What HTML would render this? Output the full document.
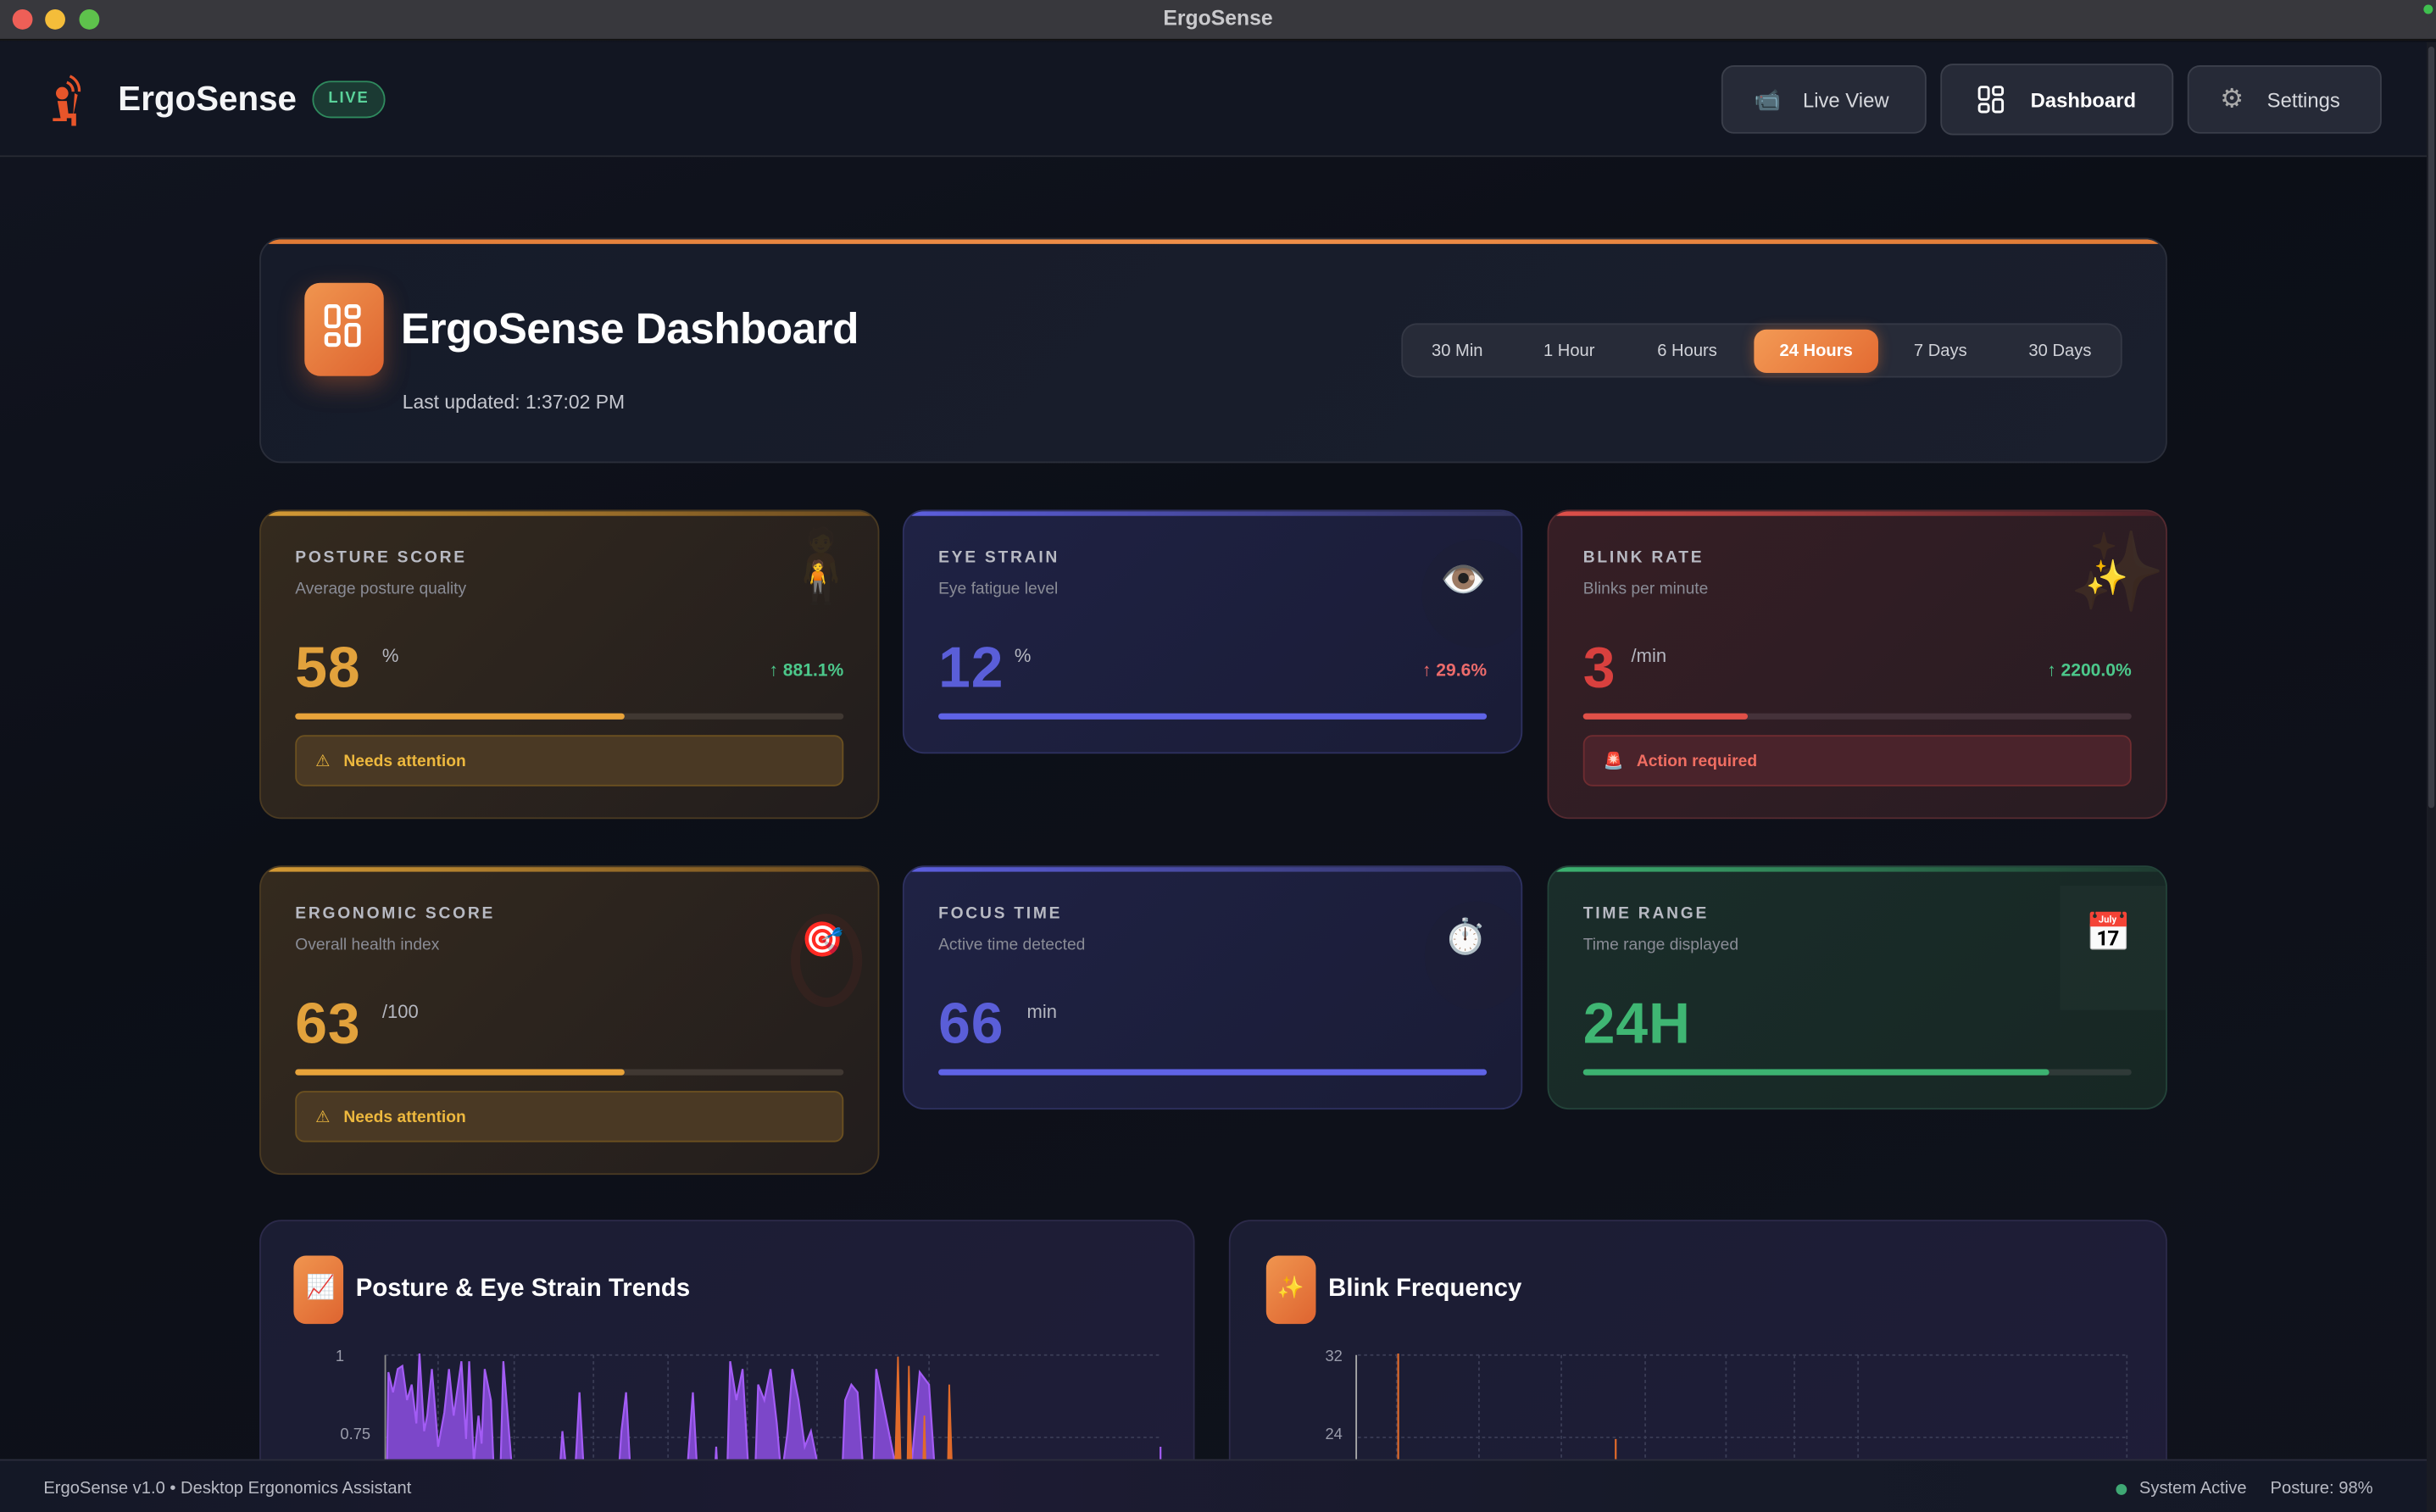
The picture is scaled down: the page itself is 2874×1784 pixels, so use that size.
<!DOCTYPE html>
<html><head><meta charset="utf-8">
<style>
*{box-sizing:border-box;margin:0;padding:0}
html,body{width:2874px;height:1784px;overflow:hidden;background:#0d1018}
body{font-family:"Liberation Sans","DejaVu Sans",sans-serif;color:#fff}
#s{position:absolute;left:0;top:0;width:1568px;height:973px;transform:scale(1.83291,1.83350);transform-origin:0 0;background:linear-gradient(160deg,#121521 0%,#0c0f17 40%,#10131d 100%);overflow:hidden}
.abs{position:absolute}
.tb{left:0;top:0;width:1568px;height:26px;background:#38383d;border-bottom:1px solid #111}
.dot{position:absolute;top:6px;width:13px;height:13px;border-radius:50%}
.hdr{left:0;top:27px;width:1562px;height:74px;background:#121622;border-bottom:1px solid #272a33}
.nav{position:absolute;top:42px;height:44px;background:#262a37;border:1px solid #3b3f4b;border-radius:8px;color:#d7d9de;font-size:13px;display:flex;align-items:center}
.card{position:absolute;border-radius:14px;overflow:hidden}
.lbl{position:absolute;left:22px;top:24px;font-size:10.5px;font-weight:bold;letter-spacing:1.5px;color:#b8bac3}
.sub{position:absolute;left:22px;top:44px;font-size:10.5px;color:#8a8c96}
.val{position:absolute;left:22px;top:80px;font-size:37px;font-weight:bold;letter-spacing:0.5px}
.unit{position:absolute;top:86px;font-size:12px;color:#b5b7c0}
.tr{position:absolute;right:22px;top:97px;font-size:11.5px;font-weight:bold}
.bar{position:absolute;left:22px;right:22px;top:130px;height:4px;border-radius:2px}
.warn{position:absolute;left:22px;right:22px;top:144px;height:33px;border-radius:6px;font-size:10.5px;font-weight:bold;display:flex;align-items:center;padding-left:12px}
.pill{position:absolute;top:212px;height:28px;font-size:11px;color:#d0d2d8;display:flex;align-items:center;justify-content:center;border-radius:8px}
</style></head><body><div id="s">
<div class="abs tb"><div class="dot" style="left:8px;background:#ee5f57"></div><div class="dot" style="left:29px;background:#f4bd3a"></div><div class="dot" style="left:51px;background:#5ec24c"></div>
<div class="abs" style="left:0;width:1568px;top:4px;text-align:center;font-size:13.5px;font-weight:bold;color:#c9c9cc">ErgoSense</div>
<div class="abs" style="right:2px;top:3px;width:6px;height:6px;border-radius:50%;background:#3fbf4f"></div></div>
<div class="abs hdr"></div>
<div class="abs" style="left:1562px;top:27px;width:6px;height:946px;background:#1a1c24"></div>
<div class="abs" style="left:1563px;top:30px;width:4px;height:490px;border-radius:2px;background:#3a3c44"></div>
<svg class="abs" style="left:31px;top:45px" width="28" height="38" viewBox="0 0 28 38"><circle cx="9" cy="15" r="4" fill="#e8552a"/><path d="M12 8a6 6 0 0 1 4 6M14 4a10 10 0 0 1 6 10" stroke="#e8552a" stroke-width="1.8" fill="none"/><path d="M6 20h6l1 8h5v8h-3v-5H8z M3 31h9v2H3z M17 15l2 1-3 14" fill="#e8552a"/></svg>
<div class="abs" style="left:76px;top:51px;font-size:22px;font-weight:bold;color:#f4f5f7">ErgoSense</div>
<div class="abs" style="left:201px;top:52px;width:47px;height:24px;border:1px solid #2f8a5e;background:#1b3a33;border-radius:12px;color:#5ad29a;font-size:10px;font-weight:bold;letter-spacing:1px;text-align:center;line-height:22px">LIVE</div>
<div class="nav" style="left:1108px;width:132px"><span style="margin-left:20px;font-size:14px;color:#999">📹</span><span style="margin-left:14px">Live View</span></div>
<div class="nav" style="left:1249px;width:150px;top:41px;height:46px;color:#fff;font-weight:bold"><svg style="margin-left:23px" width="17" height="18" viewBox="0 0 17 18"><g fill="none" stroke="#fff" stroke-width="1.6"><rect x="1" y="1" width="6" height="8" rx="1.5"/><rect x="10" y="1" width="6" height="5" rx="1.5"/><rect x="1" y="12" width="6" height="5" rx="1.5"/><rect x="10" y="9" width="6" height="8" rx="1.5"/></g></svg><span style="margin-left:17px">Dashboard</span></div>
<div class="nav" style="left:1408px;width:125px"><span style="margin-left:20px;font-size:17px;color:#aaa">⚙</span><span style="margin-left:15px">Settings</span></div>

<div class="card" style="left:167px;top:153px;width:1228px;height:145px;background:linear-gradient(135deg,#161b29,#1a1f2d);border:1px solid #2a2e3a">
<div class="abs" style="left:0;top:0;width:100%;height:3px;background:linear-gradient(90deg,#e07a35,#f0904a,#e07a35)"></div>
<div class="abs" style="left:28px;top:28px;width:51px;height:60px;border-radius:10px;background:linear-gradient(135deg,#f0954f,#de6430);box-shadow:0 6px 16px rgba(230,110,50,0.35)"></div>
<svg class="abs" style="left:40px;top:41px" width="26" height="30" viewBox="0 0 26 30"><g fill="none" stroke="#fff" stroke-width="2.4"><rect x="2" y="2" width="8" height="13" rx="2"/><rect x="15" y="2" width="8" height="7" rx="2"/><rect x="2" y="20" width="8" height="7" rx="2"/><rect x="15" y="14" width="8" height="13" rx="2"/></g></svg>
<div class="abs" style="left:90px;top:42px;font-size:28px;font-weight:bold;letter-spacing:-0.3px">ErgoSense Dashboard</div>
<div class="abs" style="left:91px;top:98px;font-size:12.5px;color:#c5c7cf">Last updated: 1:37:02 PM</div>
</div>
<div class="abs" style="left:902px;top:208px;width:464px;height:35px;border-radius:10px;background:#272b38;border:1px solid #343845"></div>
<div class="pill" style="left:910px;width:56px">30 Min</div>
<div class="pill" style="left:982px;width:56px">1 Hour</div>
<div class="pill" style="left:1055px;width:62px">6 Hours</div>
<div class="pill" style="left:1129px;width:80px;background:linear-gradient(135deg,#f39a55,#e36b32);color:#fff;font-weight:bold;box-shadow:0 0 8px rgba(240,120,50,0.4)">24 Hours</div>
<div class="pill" style="left:1222px;width:54px">7 Days</div>
<div class="pill" style="left:1296px;width:60px">30 Days</div>

<!-- Row1 -->
<div class="card" style="left:167px;top:328px;width:399px;height:199px;background:linear-gradient(135deg,#342a1e,#221d1d);border:1px solid #4a3a22">
<div class="abs" style="left:0;top:0;width:100%;height:3px;background:linear-gradient(90deg,#d49a35,#6a4a20)"></div>
<div class="abs" style="right:8px;top:8px;font-size:46px;opacity:0.06">🧍</div><div class="abs" style="right:26px;top:30px;font-size:20px">🧍</div>
<div class="lbl">POSTURE SCORE</div><div class="sub">Average posture quality</div>
<div class="val" style="color:#e2a23c">58</div><div class="unit" style="left:78px">%</div>
<div class="tr" style="color:#4cc88b">↑ 881.1%</div>
<div class="bar" style="background:#403832"><div style="width:60%;height:100%;border-radius:2px;background:#e8a33a"></div></div>
<div class="warn" style="background:#4a3924;border:1px solid #6b5020;color:#edb83e">⚠&nbsp;&nbsp; Needs attention</div></div>

<div class="card" style="left:581px;top:328px;width:399px;height:157px;background:linear-gradient(135deg,#1f2244,#1a1c36);border:1px solid #2e3160">
<div class="abs" style="left:0;top:0;width:100%;height:3px;background:linear-gradient(90deg,#5d5fe0,#30325a)"></div>
<div class="abs" style="right:-6px;top:18px;width:70px;height:70px;border-radius:50%;background:#1c1e36;opacity:0.6"></div><div class="abs" style="right:22px;top:30px;font-size:24px">👁️</div>
<div class="lbl">EYE STRAIN</div><div class="sub">Eye fatigue level</div>
<div class="val" style="color:#5a5ed8">12</div><div class="unit" style="left:71px">%</div>
<div class="tr" style="color:#ec6b6b">↑ 29.6%</div>
<div class="bar" style="background:#5f63e6"></div></div>

<div class="card" style="left:996px;top:328px;width:399px;height:199px;background:linear-gradient(135deg,#361e25,#281c22);border:1px solid #552a30">
<div class="abs" style="left:0;top:0;width:100%;height:3px;background:linear-gradient(90deg,#e0504a,#4a2028)"></div>
<div class="abs" style="right:0;top:10px;font-size:50px;opacity:0.07">✨</div><div class="abs" style="right:24px;top:30px;font-size:22px;color:#f6d24a">✨</div>
<div class="lbl">BLINK RATE</div><div class="sub">Blinks per minute</div>
<div class="val" style="color:#d8403e">3</div><div class="unit" style="left:53px">/min</div>
<div class="tr" style="color:#4cc88b">↑ 2200.0%</div>
<div class="bar" style="background:#45323a"><div style="width:30%;height:100%;border-radius:2px;background:#e05048"></div></div>
<div class="warn" style="background:#4a232b;border:1px solid #6f2c30;color:#f06e62">🚨&nbsp;&nbsp; Action required</div></div>

<!-- Row2 -->
<div class="card" style="left:167px;top:557px;width:399px;height:199px;background:linear-gradient(135deg,#342a1e,#221d1d);border:1px solid #4a3a22">
<div class="abs" style="left:0;top:0;width:100%;height:3px;background:linear-gradient(90deg,#d49a35,#6a4a20)"></div>
<div class="abs" style="right:10px;top:30px;width:46px;height:60px;border-radius:50%;border:6px solid rgba(120,40,40,0.15)"></div><div class="abs" style="right:22px;top:34px;font-size:22px">🎯</div>
<div class="lbl">ERGONOMIC SCORE</div><div class="sub">Overall health index</div>
<div class="val" style="color:#e2a23c">63</div><div class="unit" style="left:78px">/100</div>
<div class="bar" style="background:#403832"><div style="width:60%;height:100%;border-radius:2px;background:#e8a33a"></div></div>
<div class="warn" style="background:#4a3924;border:1px solid #6b5020;color:#edb83e">⚠&nbsp;&nbsp; Needs attention</div></div>

<div class="card" style="left:581px;top:557px;width:399px;height:157px;background:linear-gradient(135deg,#1f2244,#1a1c36);border:1px solid #2e3160">
<div class="abs" style="left:0;top:0;width:100%;height:3px;background:linear-gradient(90deg,#5d5fe0,#30325a)"></div>
<div class="abs" style="right:-4px;top:22px;width:66px;height:70px;border-radius:50%;background:#1c1e36;opacity:0.7"></div><div class="abs" style="right:22px;top:32px;font-size:22px">⏱️</div>
<div class="lbl">FOCUS TIME</div><div class="sub">Active time detected</div>
<div class="val" style="color:#5a5ed8">66</div><div class="unit" style="left:79px">min</div>
<div class="bar" style="background:#5f63e6"></div></div>

<div class="card" style="left:996px;top:557px;width:399px;height:157px;background:linear-gradient(135deg,#1a2d2a,#172724);border:1px solid #24443a">
<div class="abs" style="left:0;top:0;width:100%;height:3px;background:linear-gradient(90deg,#3cb371,#1e3a30)"></div>
<div class="abs" style="right:0;top:12px;width:68px;height:80px;background:#223430;opacity:0.5"></div><div class="abs" style="right:22px;top:28px;font-size:24px">📅</div>
<div class="lbl">TIME RANGE</div><div class="sub">Time range displayed</div>
<div class="val" style="color:#3fb673">24H</div>
<div class="bar" style="background:#2f3a38"><div style="width:85%;height:100%;border-radius:2px;background:#3cb371"></div></div></div>

<!-- charts -->
<div class="card" style="left:167px;top:785px;width:602px;height:200px;background:linear-gradient(135deg,#1b1d33,#1f1d38);border:1px solid #2c2a4a">
<div class="abs" style="left:21px;top:22px;width:32px;height:44px;border-radius:8px;background:linear-gradient(135deg,#f0954f,#de6430)"></div><div class="abs" style="left:29px;top:33px;font-size:15px">📈</div>
<div class="abs" style="left:61px;top:35px;font-size:16px;font-weight:bold">Posture &amp; Eye Strain Trends</div>
<div class="abs" style="left:48px;top:82px;font-size:10px;color:#9a9cab">1</div>
<div class="abs" style="left:51px;top:132px;font-size:10px;color:#9a9cab">0.75</div>
<svg class="abs" style="left:74px;top:85px" width="510" height="80"><g stroke="#3a3c55" stroke-dasharray="2 2" fill="none"><path d="M6 1H504M6 54H504"/><path d="M40 1V80M89 1V80M140 1V80M188 1V80M239 1V80M284 1V80M356 1V80"/></g><path d="M6 1V80" stroke="#888"/><path d="M7 80L8 12 11 25 14 10 17 8 20 30 23 20 26 45 28 0 31 50 33 40 36 10 40 60 44 38 47 10 50 40 55 5 58 55 60 5 63 70 66 40 68 58 70 10 74 30 76 80 80 80 82 5 88 80 118 80 120 50 123 80 128 80 131 25 134 80 156 80 158 50 161 25 164 80 ZM200 80L204 25 207 80 218 80 219 60 220 80 226 80 228 5 232 30 236 10 240 80 244 80 246 20 250 30 254 10 258 45 261 80 265 50 268 10 272 30 276 60 280 50 286 80 300 80 302 30 306 20 310 25 314 80 320 80 322 10 330 50 336 80 344 80 350 12 356 20 360 80 370 80 375 80ZM505 80V60" fill="#7c47c9" stroke="#a35cf5" stroke-width="1.2"/><path d="M334 80L336 2 338 80ZM342 80L343 8 345 80ZM352 80L353 40 354 80ZM368 80L369 20 371 80Z" fill="#e06a2a" stroke="#e06a2a"/></svg>
</div>
<div class="card" style="left:791px;top:785px;width:604px;height:200px;background:linear-gradient(135deg,#1b1d33,#1f1d38);border:1px solid #2c2a4a">
<div class="abs" style="left:23px;top:22px;width:32px;height:44px;border-radius:8px;background:linear-gradient(135deg,#f0954f,#de6430)"></div><div class="abs" style="left:30px;top:34px;font-size:14px;color:#ffe36a">✨</div>
<div class="abs" style="left:63px;top:35px;font-size:16px;font-weight:bold">Blink Frequency</div>
<div class="abs" style="left:61px;top:82px;font-size:10px;color:#9a9cab">32</div>
<div class="abs" style="left:61px;top:132px;font-size:10px;color:#9a9cab">24</div>
<svg class="abs" style="left:80px;top:85px" width="500" height="80"><g stroke="#3a3c55" stroke-dasharray="2 2" fill="none"><path d="M2 1H497M2 54H497"/><path d="M27 1V80M80 1V80M133 1V80M187 1V80M239 1V80M283 1V80M324 1V80M497 1V80"/></g><path d="M1 1V80" stroke="#aaa"/><path d="M28 0V80M168 55V80" stroke="#e06a2a" stroke-width="1.2"/></svg>
</div>

<div class="abs" style="left:0;top:939px;width:1562px;height:34px;background:linear-gradient(90deg,#141826,#1d1b33 40%,#161a28 70%,#141826);border-top:1px solid #2b2d3c"></div>
<div class="abs" style="left:28px;top:952px;font-size:11px;color:#b8bac4">ErgoSense v1.0 • Desktop Ergonomics Assistant</div>
<div class="abs" style="left:1362px;top:955px;width:7px;height:7px;border-radius:50%;background:#3fa874"></div>
<div class="abs" style="left:1377px;top:952px;font-size:11px;color:#b8bac4">System Active&nbsp;&nbsp;&nbsp;&nbsp;&nbsp;Posture: 98%</div>
</div></body></html>
